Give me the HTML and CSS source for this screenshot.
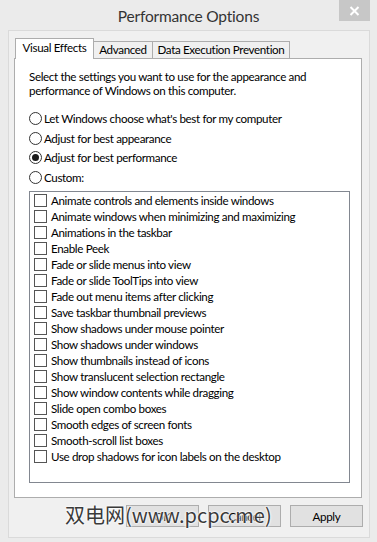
FILE: index.html
```html
<!DOCTYPE html>
<html lang="en">
    <head>
        <meta charset="UTF-8">
        <meta name="viewport" content="width=device-width, initial-scale=1.0">
        <title>Performance Options</title>
        <link rel="stylesheet" href="styles.css">
    </head>
<body>
    <div class="window">
        <div class="titlebar">
            <span></span>
            <span class="title">Performance Options</span>
            <span class="close">
                <svg width="11" height="10" viewBox="0 0 11 10">
                    <path d="M1.5 1 L9.5 9 M9.5 1 L1.5 9" stroke="#fff" stroke-width="2" fill="none"/>
                </svg>
            </span>
        </div>

        <div class="client">
            <div class="tabs">
                <div class="tab active">Visual Effects</div>
                <div class="tab adv">Advanced</div>
                <div class="tab dep">Data Execution Prevention</div>
            </div>

            <div class="panel">
                <p class="intro">Select the settings you want to use for the appearance and<br>performance of Windows on this computer.</p>

                <div class="radios">
                    <div class="radio"><span class="dot"></span>Let Windows choose what's best for my computer</div>
                    <div class="radio"><span class="dot"></span>Adjust for best appearance</div>
                    <div class="radio checked"><span class="dot"></span>Adjust for best performance</div>
                    <div class="radio"><span class="dot"></span>Custom:</div>
                </div>

                <div class="listbox">
                    <div class="item"><span class="box"></span>Animate controls and elements inside windows</div>
                    <div class="item"><span class="box"></span>Animate windows when minimizing and maximizing</div>
                    <div class="item"><span class="box"></span>Animations in the taskbar</div>
                    <div class="item"><span class="box"></span>Enable Peek</div>
                    <div class="item"><span class="box"></span>Fade or slide menus into view</div>
                    <div class="item"><span class="box"></span>Fade or slide ToolTips into view</div>
                    <div class="item"><span class="box"></span>Fade out menu items after clicking</div>
                    <div class="item"><span class="box"></span>Save taskbar thumbnail previews</div>
                    <div class="item"><span class="box"></span>Show shadows under mouse pointer</div>
                    <div class="item"><span class="box"></span>Show shadows under windows</div>
                    <div class="item"><span class="box"></span>Show thumbnails instead of icons</div>
                    <div class="item"><span class="box"></span>Show translucent selection rectangle</div>
                    <div class="item"><span class="box"></span>Show window contents while dragging</div>
                    <div class="item"><span class="box"></span>Slide open combo boxes</div>
                    <div class="item"><span class="box"></span>Smooth edges of screen fonts</div>
                    <div class="item"><span class="box"></span>Smooth-scroll list boxes</div>
                    <div class="item"><span class="box"></span>Use drop shadows for icon labels on the desktop</div>
                </div>
            </div>

            <div class="buttons">
                <button>OK</button>
                <button>Cancel</button>
                <button>Apply</button>
            </div>
        </div>
    </div>

    <div class="watermark">双电网(www.pcpc.me)</div>
</body>
</html>
```

FILE: styles.css
```css
* {
    box-sizing: border-box;
}
body {
    margin: 0;
    width: 377px;
    height: 542px;
    background-color: #ebebeb;
    font-family: Lato, Arial, sans-serif;
    font-size: 11.6px;
    letter-spacing: -0.35px;
    color: #000;
    position: relative;
    overflow: hidden;
}
.window {
    display: flex;
    flex-direction: column;
}
.titlebar {
    height: 30px;
    display: grid;
    grid-template-columns: 1fr auto 1fr;
    align-items: start;
}
.title {
    font-size: 15.5px;
    letter-spacing: -0.2px;
    color: #333;
    line-height: 20px;
    margin-top: 6px;
}
.close {
    justify-self: end;
    width: 31px;
    height: 21px;
    margin-right: 7px;
    background-color: #c7c7c7;
    display: flex;
    align-items: center;
    justify-content: center;
}
.client {
    margin: 0 7px 0 8px;
    height: 508px;
    background-color: #f0f0f0;
    border: 1px solid #dadada;
    padding: 7px 7px 0 5px;
}
.tabs {
    display: flex;
    align-items: flex-end;
    height: 20px;
    padding-left: 1px;
}
.tab {
    height: 17px;
    line-height: 16px;
    text-align: center;
    border: 1px solid #adadad;
    border-bottom: 0;
    background-color: #f0f0f0;
    margin-left: -1px;
    white-space: nowrap;
}
.tab.active {
    position: relative;
    width: 79px;
    height: 21px;
    margin-left: 0;
    margin-bottom: -1px;
    line-height: 17px;
    background-color: #fff;
    z-index: 1;
}
.tab.adv {
    width: 60px;
}
.tab.dep {
    width: 138px;
}
.panel {
    height: 440px;
    background-color: #fff;
    border: 1px solid #adadad;
    padding: 11px 11px 0 14px;
}
.intro {
    margin: 0;
    line-height: 14px;
    white-space: nowrap;
}
.radios {
    margin-top: 11px;
}
.radio {
    display: flex;
    align-items: center;
    height: 19.5px;
    gap: 2px;
}
.dot {
    width: 13px;
    height: 13px;
    border: 1px solid #333;
    border-radius: 50%;
    display: flex;
    align-items: center;
    justify-content: center;
    background-color: #fff;
}
.radio.checked .dot::after {
    content: "";
    width: 7px;
    height: 7px;
    border-radius: 50%;
    background-color: #1a1a1a;
}
.listbox {
    margin-top: 4px;
    width: 321px;
    height: 292px;
    border: 1px solid #828790;
    padding: 0 0 0 4px;
}
.item {
    display: flex;
    align-items: center;
    height: 16px;
    gap: 4px;
    white-space: nowrap;
}
.box {
    width: 13px;
    height: 13px;
    border: 1px solid #555;
    background-color: #fff;
}
.buttons {
    display: flex;
    justify-content: flex-end;
    gap: 9px;
    margin-top: 7px;
    margin-right: -1px;
}
button {
    width: 73px;
    height: 22px;
    font-family: Lato, Arial, sans-serif;
    font-size: 11.6px;
    letter-spacing: -0.35px;
    color: #000;
    background-color: #e1e1e1;
    border: 1px solid #adadad;
    padding: 0;
}
.watermark {
    position: absolute;
    left: 65px;
    top: 501px;
    font-family: "Noto Sans CJK SC", sans-serif;
    font-size: 20px;
    letter-spacing: 0;
    line-height: 28px;
    color: #3a3a3a;
    text-shadow: 0 0 2px #fff, 0 0 2px #fff, 0 0 3px #fff;
    white-space: nowrap;
}
```
